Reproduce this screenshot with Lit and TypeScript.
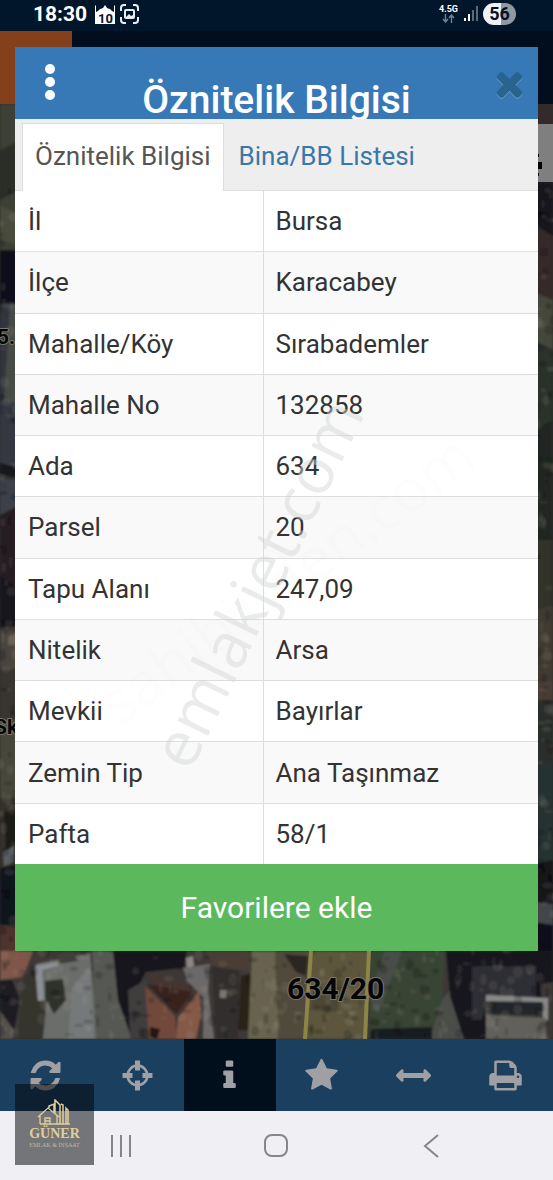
import { LitElement, html, css, svg } from "lit";
import { customElement, state } from "lit/decorators.js";

const ROWS: [string, string][] = [
  ["İl", "Bursa"],
  ["İlçe", "Karacabey"],
  ["Mahalle/Köy", "Sırabademler"],
  ["Mahalle No", "132858"],
  ["Ada", "634"],
  ["Parsel", "20"],
  ["Tapu Alanı", "247,09"],
  ["Nitelik", "Arsa"],
  ["Mevkii", "Bayırlar"],
  ["Zemin Tip", "Ana Taşınmaz"],
  ["Pafta", "58/1"],
];

const ring = (cx: number, cy: number, r: number) =>
  `M${cx - r} ${cy}a${r} ${r} 0 1 0 ${2 * r} 0a${r} ${r} 0 1 0 ${-2 * r} 0z`;

const ICONS: Record<string, string> = {
  refresh:
    "M1639 1056q0 5-1 7-64 268-268 434.500t-478 166.500q-146 0-282.500-55t-243.500-157l-129 129q-19 19-45 19t-45-19-19-45v-448q0-26 19-45t45-19h448q26 0 45 19t19 45-19 45l-137 137q71 66 161 102t187 36q134 0 250-65t186-179q11-17 53-117 8-23 30-23h192q13 0 22.500 9.500t9.500 22.500zm25-800v448q0 26-19 45t-45 19h-448q-26 0-45-19t-19-45 19-45l138-138q-148-137-349-137-134 0-250 65t-186 179q-11 17-53 117-8 23-30 23h-199q-13 0-22.500-9.500t-9.500-22.500v-7q65-268 270-434.500t480-166.500q146 0 284 55.500t245 156.500l130-129q19-19 45-19t45 19 19 45z",
  crosshairs:
    ring(896, 896, 570) +
    ring(896, 896, 435) +
    "M768 130h256v510h-256zM768 1152h256v510h-256zM130 768h510v256h-510zM1152 768h510v256h-510z",
  info:
    "M1216 1344v128q0 26-19 45t-45 19h-512q-26 0-45-19t-19-45v-128q0-26 19-45t45-19h64v-384h-64q-26 0-45-19t-19-45v-128q0-26 19-45t45-19h384q26 0 45 19t19 45v576h64q26 0 45 19t19 45zm-128-1152v192q0 26-19 45t-45 19h-256q-26 0-45-19t-19-45v-192q0-26 19-45t45-19h256q26 0 45 19t19 45z",
  star:
    "M1728 647q0 22-26 48l-363 354 86 500q1 7 1 20 0 21-10.500 35.500t-30.500 14.500q-19 0-40-12l-449-236-449 236q-22 12-40 12-21 0-31.500-14.500t-10.500-35.500q0-6 2-20l86-500-364-354q-25-27-25-48 0-37 56-46l502-73 225-455q19-41 49-41t49 41l225 455 502 73q56 9 56 46z",
  arrows:
    "M1792 896q0 26-19 45l-256 256q-19 19-45 19t-45-19-19-45v-128h-1024v128q0 26-19 45t-45 19-45-19l-256-256q-19-19-19-45t19-45l256-256q19-19 45-19t45 19 19 45v128h1024v-128q0-26 19-45t45-19 45 19l256 256q19 19 19 45z",
  print:
    "M448 1536h896v-256h-896v256zm0-640h896v-384h-160q-40 0-68-28t-28-68v-160h-640v640zm1152 64q0-26-19-45t-45-19-45 19-19 45 19 45 45 19 45-19 19-45zm128 0v416q0 13-9.500 22.500t-22.500 9.500h-224v160q0 40-28 68t-68 28h-960q-40 0-68-28t-28-68v-160h-224q-13 0-22.500-9.500t-9.500-22.500v-416q0-79 56.500-135.500t135.500-56.500h64v-544q0-40 28-68t68-28h672q40 0 88 20t76 48l152 152q28 28 48 76t20 88v256h64q79 0 135.500 56.500t56.500 135.500z",
  times:
    "M1490 1322q0 40-28 68l-136 136q-28 28-68 28t-68-28l-294-294-294 294q-28 28-68 28t-68-28l-136-136q-28-28-28-68t28-68l294-294-294-294q-28-28-28-68t28-68l136-136q28-28 68-28t68 28l294 294 294-294q28-28 68-28t68 28l136 136q28 28 28 68t-28 68l-294 294 294 294q28 28 28 68z",
};

/* Rings are cut out by parity, overlapping tabs are drawn over them separately. */
const icon = (name: string) => {
  if (name !== "crosshairs") {
    return html`<svg class="icon" viewBox="0 0 1792 1792" aria-hidden="true"><path d=${ICONS[name]}></path></svg>`;
  }
  const split = ICONS.crosshairs.indexOf("M768");
  return html`<svg class="icon" viewBox="0 0 1792 1792" aria-hidden="true">
    <path fill-rule="evenodd" d=${ICONS.crosshairs.slice(0, split)}></path>
    <path d=${ICONS.crosshairs.slice(split)}></path>
  </svg>`;
};

const TOOLS: [string, string][] = [
  ["refresh", "Yenile"],
  ["crosshairs", "Konum"],
  ["info", "Bilgi"],
  ["star", "Favoriler"],
  ["arrows", "Ölçüm"],
  ["print", "Yazdır"],
];

/* Aerial imagery as flat patches: fill colour, then polygon points. */
const PATCHES: [string, string][] = [
  ["#3e4036", "0,104 20,104 20,252 0,252"],
  ["#2b2d27", "0,150 20,140 20,190 0,200"],
  ["#4a4c3c", "0,205 20,215 20,245 0,240"],
  ["#0b0e1b", "0,250 20,250 20,304 0,304"],
  ["#464b45", "0,304 20,304 20,405 0,400"],
  ["#30343c", "0,304 10,304 4,400 0,400"],
  ["#363943", "0,400 20,405 20,470 0,465"],
  ["#12141f", "0,463 20,468 20,478 0,474"],
  ["#3d414b", "0,478 20,480 20,520 0,520"],
  ["#281d21", "0,515 20,505 20,600 0,600"],
  ["#17141a", "0,575 20,590 20,630 0,625"],
  ["#4a443d", "0,630 20,625 20,700 0,705"],
  ["#696156", "8,636 20,632 20,645 8,645"],
  ["#39362f", "0,670 20,668 20,720 0,720"],
  ["#47463a", "0,720 20,720 20,800 0,800"],
  ["#35332b", "0,798 20,798 20,870 0,870"],
  ["#1d1a16", "4,812 20,808 20,855 6,850"],
  ["#5b5f64", "3,852 14,846 14,862 4,866"],
  ["#10121c", "0,868 20,864 20,925 0,925"],
  ["#4d342d", "0,925 20,928 20,952 0,952"],
  ["#342929", "533,104 553,104 553,124 533,124"],
  ["#16131d", "533,182 553,182 553,238 533,222"],
  ["#36292b", "533,224 553,236 553,300 533,292"],
  ["#45463c", "533,292 553,300 553,350 533,340"],
  ["#2c332c", "533,340 553,350 553,440 533,440"],
  ["#222823", "533,430 553,420 553,540 533,540"],
  ["#30332b", "533,540 553,540 553,612 533,612"],
  ["#403a33", "533,610 553,606 553,680 533,680"],
  ["#4a3e39", "533,682 553,680 553,700 533,700"],
  ["#2c2e2c", "533,700 553,700 553,770 533,770"],
  ["#263130", "533,770 553,760 553,870 533,860"],
  ["#131319", "533,865 553,860 553,905 533,905"],
  ["#42454a", "533,902 553,904 553,925 533,925"],
  ["#0e0d1a", "533,922 553,925 553,960 533,960"],
  ["#3c3936", "0,951 553,951 553,1039 0,1039"],
  ["#80574a", "0,951 33,951 23,977 0,980"],
  ["#1e1d22", "0,980 12,980 20,1000 14,1030 0,1010"],
  ["#54514c", "0,1012 14,1030 12,1039 0,1039"],
  ["#35342f", "23,977 36,970 46,1008 42,1039 18,1039"],
  ["#6b6d6a", "36,964 90,953 98,1039 43,1039 47,1000 38,1001"],
  ["#8c9096", "35,966 58,962 58,966 42,970 44,1000 38,1001"],
  ["#2e302b", "45,981 63,979 66,1000 54,1014 45,998"],
  ["#40413b", "57,955 72,951 78,961 60,964"],
  ["#76797a", "72,988 90,966 94,1039 68,1039"],
  ["#575953", "92,951 114,951 118,990 132,1039 96,1039"],
  ["#17161f", "113,951 187,951 184,968 146,972 134,994 130,1034 118,1000"],
  ["#403c3d", "128,990 146,980 149,1039 130,1039"],
  ["#45342f", "145,972 200,988 177,1016"],
  ["#37231f", "147,984 192,992 176,1014"],
  ["#70493a", "145,986 175,1016 177,1039 149,1039"],
  ["#845a47", "178,1018 199,991 201,1014 196,1039 176,1039"],
  ["#201713", "150,1027 160,1029 157,1039 150,1037"],
  ["#6c6969", "183,968 210,964 208,990 214,1039 203,1039 204,998 188,982"],
  ["#8b8784", "186,958 193,956 194,966 187,968"],
  ["#302f2d", "212,966 240,958 238,1039 216,1039"],
  ["#777470", "220,990 227,990 226,998 220,998"],
  ["#493c34", "206,951 252,951 250,972 212,966"],
  ["#2c2018", "241,976 251,974 248,1030 238,1030"],
  ["#67624f", "252,951 276,951 280,1039 248,1039"],
  ["#514a3b", "275,951 310,951 305,1039 278,1039"],
  ["#2a2723", "284,954 308,956 306,976 296,972"],
  ["#5d573d", "310,951 369,951 366,1039 305,1039"],
  ["#4c4633", "314,985 342,980 338,1012 310,1010"],
  ["#394434", "371,951 445,951 442,1006 428,1039 369,1039"],
  ["#4a4d49", "384,951 402,951 378,1014 370,1000"],
  ["#4c4e4a", "442,1000 450,990 464,1039 430,1039"],
  ["#171c22", "371,1029 432,1027 432,1039 370,1039"],
  ["#15151f", "446,951 553,951 553,1000 486,1000 486,1039 464,1039 450,996"],
  ["#2d2d34", "472,966 536,966 536,1000 486,1002 482,1020 472,1020"],
  ["#3d3935", "540,984 553,982 553,1039 546,1039"],
  ["#888889", "486,995 548,998 548,1020 543,1020 543,1002 486,1001"],
  ["#24262a", "488,1002 542,1002 542,1015 488,1014"],
  ["#62615c", "486,1015 546,1018 546,1039 486,1039"],
];

/* Fixed-seed speckle that gives the imagery its ground texture. */
const speckles = (() => {
  let seed = 7;
  const next = () => (seed = (seed * 16807) % 2147483647) / 2147483647;
  return Array.from({ length: 480 }, (_, i) => {
    const edge = i % 3 === 0;
    const x = edge ? (next() > 0.5 ? 553 - next() * 15 : next() * 15) : next() * 553;
    const y = edge ? 190 + next() * 760 : 951 + next() * 88;
    return { x, y, rx: 1 + next() * 4, ry: 1 + next() * 5, light: next() > 0.5 };
  });
})();

@customElement("aerial-map")
export class AerialMap extends LitElement {
  static styles = css`
    :host {
      display: block;
      background: #2b2d2b;
    }
    .imagery {
      display: block;
      width: 100%;
      height: 100%;
    }
    .label {
      font-family: Roboto, sans-serif;
      font-weight: 700;
      fill: #050505;
      stroke: #77776f;
      stroke-width: 2px;
      stroke-linejoin: round;
      paint-order: stroke;
    }
    .parcel {
      font-size: 30px;
    }
    .small {
      font-size: 21px;
    }
  `;

  render() {
    return html`
      <svg class="imagery" viewBox="0 104 553 935" preserveAspectRatio="xMidYMax slice" role="img" aria-label="Uydu haritası">
        <defs><filter id="soft"><feGaussianBlur stdDeviation="1.1" /></filter></defs>
        <g filter="url(#soft)">
          ${PATCHES.map(([fill, points]) => svg`<polygon fill=${fill} points=${points} />`)}
          ${speckles.map(
            (s) => svg`<ellipse cx=${s.x} cy=${s.y} rx=${s.rx} ry=${s.ry}
              fill=${s.light ? "#a8a294" : "#08080c"} opacity=${s.light ? 0.14 : 0.18} />`
          )}
        </g>
        <path d="M311 951L305 1039M369 951L365 1039" stroke="#8d8547" stroke-width="4" fill="none" />
        <rect x="530" y="124" width="23" height="58" fill="#7f7f7f" />
        <path d="M530 162h12v7h-12zM534 154h5v3h-5zM534 173h5v3h-5z" fill="#000" />
        <text class="label small" x="-3" y="344">5.</text>
        <text class="label small" x="-6" y="734">Sk</text>
        <text class="label parcel" x="287" y="999">634/20</text>
      </svg>
    `;
  }
}

@customElement("app-root")
export class AppRoot extends LitElement {
  @state() private tab = 0;

  static styles = css`
    :host {
      display: flex;
      flex-direction: column;
      position: relative;
      min-height: 100vh;
      font-family: Roboto, sans-serif;
      background: #f0f0f4;
      color: #333;
    }
    * {
      box-sizing: border-box;
    }
    button {
      font: inherit;
      color: inherit;
      background: none;
      border: 0;
      padding: 0;
      margin: 0;
      cursor: pointer;
    }
    svg {
      display: block;
    }
    .icon {
      width: 35px;
      height: 35px;
      fill: currentColor;
    }

    .status {
      display: flex;
      align-items: center;
      height: 31px;
      padding: 0 37px 4px 33px;
      background: #01162a;
      color: #fff;
    }
    .clock {
      font-size: 21px;
      line-height: 24px;
      font-weight: 700;
    }
    .notices {
      display: flex;
      gap: 5px;
      margin-left: 8px;
      flex: 1;
    }
    .notices text {
      font: 700 13px Roboto, sans-serif;
      fill: #01162a;
    }
    .network {
      display: flex;
      flex-direction: column;
      align-items: center;
      margin-right: 6px;
      font-size: 9px;
      line-height: 10px;
      font-weight: 700;
    }
    .signal {
      margin-right: 5px;
    }
    .battery {
      width: 33px;
      border-radius: 11px;
      background: linear-gradient(90deg, #eef1f8 56%, #8f98a3 56%);
      color: #06101c;
      font-size: 18px;
      line-height: 22px;
      font-weight: 700;
      text-align: center;
    }

    .stage {
      flex: 1;
      display: grid;
      grid-template: 73px 1fr / 100%;
    }
    .appbar {
      grid-area: 1 / 1;
      background: linear-gradient(90deg, #84401b 72px, #020e1d 72px);
    }
    .map {
      grid-area: 2 / 1;
      height: 0;
      min-height: 100%;
    }
    .dialog {
      grid-area: 1 / 1 / 3 / 2;
      z-index: 1;
      position: relative;
      display: flex;
      flex-direction: column;
      margin: 16px 15px 88px;
      background: #fff;
    }
    .head {
      display: grid;
      grid-template-columns: 48px 1fr 48px;
      height: 72px;
      padding: 0 5px 0 11px;
      background: #3679b6;
      color: #fff;
      overflow: hidden;
    }
    .menu {
      display: grid;
      place-items: center;
      height: 70px;
    }
    .title {
      margin: 0;
      padding: 29px 6px 0 0;
      font-size: 39px;
      line-height: 48px;
      font-weight: 500;
      text-align: center;
      white-space: nowrap;
    }
    .close {
      display: grid;
      place-items: center;
      height: 72px;
      color: #29648f;
      filter: drop-shadow(0 1px 0 #6a9cc6);
    }
    .close .icon {
      width: 39px;
      height: 39px;
    }
    .tabs {
      display: flex;
      gap: 2px;
      height: 72px;
      padding: 4px 0 0 7px;
      background: #eee;
      border-bottom: 1px solid #ddd;
    }
    .tab {
      height: 68px;
      padding: 0 12px 4px;
      border: 1px solid transparent;
      border-bottom: 0;
      font-size: 26px;
      line-height: 32px;
      color: #3a77a8;
      white-space: nowrap;
    }
    .tab[aria-selected="true"] {
      background: #fff;
      border-color: #ddd;
      color: #555;
    }
    .body {
      flex: 1;
      display: grid;
    }
    .attributes {
      width: 100%;
      border-collapse: collapse;
      table-layout: fixed;
      font-size: 26px;
      line-height: 36px;
    }
    .attributes tr:nth-child(even) {
      background: #f9f9f9;
    }
    .attributes th,
    .attributes td {
      padding: 12px;
      border-bottom: 1px solid #ddd;
      font-weight: 400;
      text-align: left;
      vertical-align: middle;
    }
    .attributes tr:last-child > * {
      border-bottom: 0;
    }
    .attributes th {
      width: 248px;
      padding-left: 13px;
      border-right: 1px solid #ddd;
    }
    .favorite {
      height: 87px;
      background: #5cb85c;
      color: #fff;
      font-size: 30px;
      line-height: 36px;
    }
    .watermark {
      position: absolute;
      inset: 0;
      width: 100%;
      height: 100%;
      pointer-events: none;
      font-family: "Open Sans", sans-serif;
    }
    .mark {
      font-size: 64px;
      fill: rgba(209, 213, 213, 0.45);
    }
    .mark-faint {
      font-size: 60px;
      fill: rgba(90, 90, 90, 0.012);
    }

    .toolbar {
      display: grid;
      grid-template-columns: repeat(6, 1fr);
      height: 72px;
      padding-right: 2px;
      background: #1a3f5f;
      color: #a0a0a4;
    }
    .tool {
      display: grid;
      place-items: center;
    }
    .tool.active {
      background: #010f1c;
    }
    .system {
      display: grid;
      grid-template-columns: repeat(3, 1fr);
      height: 69px;
      padding: 0 45px 0 43px;
      background: #f0f0f4;
    }
    .system button {
      display: grid;
      place-items: center;
    }
    .system svg {
      fill: none;
      stroke: #85858a;
      stroke-width: 2;
    }
    .brand {
      position: absolute;
      left: 15px;
      bottom: 15px;
      width: 79px;
      height: 81px;
      padding-top: 15px;
      display: flex;
      flex-direction: column;
      align-items: center;
      background: rgba(0, 4, 8, 0.52);
      color: #e0cf9c;
      font-family: "Liberation Serif", serif;
    }
    .brand-name {
      font-size: 14px;
      line-height: 16px;
      font-weight: 700;
    }
    .brand-sub {
      font-size: 6px;
      line-height: 6px;
      color: #c4b993;
    }
  `;

  render() {
    return html`
      <header class="status">
        <span class="clock">18:30</span>
        <div class="notices">
          <svg width="20" height="20" viewBox="0 0 20 20" aria-hidden="true">
            <path d="M0 20V1l1 1v6l2-1Q4 5 8 4l2-3 2 3q4 1 5 3l2 1V2l1-1v19z" fill="#fff" />
            <text x="3" y="19">10</text>
          </svg>
          <svg width="19" height="20" viewBox="0 0 19 20" fill="none" stroke="#e8edf2" stroke-width="2" aria-hidden="true">
            <path d="M1 7V4q0-3 3-3h2M13 1h2q3 0 3 3v3M18 13v3q0 3-3 3h-2M6 19H4q-3 0-3-3v-3" />
            <rect x="5" y="6" width="9" height="8" rx="1" />
            <path d="M6 13l3-3 2 2 2-1v3H6z" fill="#e8edf2" stroke="none" />
          </svg>
        </div>
        <div class="network">
          <span>4.5G</span>
          <svg width="13" height="9" viewBox="0 0 13 9" fill="none" stroke="#76838f" stroke-width="1.4" aria-hidden="true">
            <path d="M3.500 0v8M1 5l2.500 3L6 5M9.500 9V1M7 4l2.500-3L12 4" />
          </svg>
        </div>
        <svg class="signal" width="14" height="15" viewBox="0 0 14 15" aria-hidden="true">
          <path d="M0 12h2v3H0zM4 8h2v7H4z" fill="#fff" />
          <path d="M8 4h2v11H8zM12 0h2v15h-2z" fill="#5d6a77" />
        </svg>
        <span class="battery">56</span>
      </header>

      <main class="stage">
        <div class="appbar"></div>
        <aerial-map class="map"></aerial-map>
        <section class="dialog" role="dialog" aria-labelledby="dialog-title">
          <div class="head">
            <button class="menu" aria-label="Menü">
              <svg width="12" height="38" viewBox="0 0 12 38" fill="#fff" aria-hidden="true">
                <circle cx="6" cy="6" r="5" /><circle cx="6" cy="19" r="5" /><circle cx="6" cy="32" r="5" />
              </svg>
            </button>
            <h1 class="title" id="dialog-title">Öznitelik Bilgisi</h1>
            <button class="close" aria-label="Kapat">${icon("times")}</button>
          </div>
          <div class="tabs" role="tablist">
            ${["Öznitelik Bilgisi", "Bina/BB Listesi"].map(
              (name, i) => html`<button class="tab" role="tab" aria-selected=${this.tab === i ? "true" : "false"}
                @click=${() => (this.tab = i)}>${name}</button>`
            )}
          </div>
          <div class="body">
            <table class="attributes">
              <tbody>
                ${ROWS.map(([key, value]) => html`<tr><th scope="row">${key}</th><td>${value}</td></tr>`)}
              </tbody>
            </table>
          </div>
          <button class="favorite">Favorilere ekle</button>
          <svg class="watermark" viewBox="0 0 523 904" aria-hidden="true">
            <text class="mark-faint" transform="translate(104 680) rotate(-36)">sahibinden.com</text>
            <text class="mark" transform="translate(175 726) rotate(-64)">emlakjet.com</text>
          </svg>
        </section>
      </main>

      <nav class="toolbar" aria-label="Harita araçları">
        ${TOOLS.map(
          ([name, label]) =>
            html`<button class="tool ${name === "info" ? "active" : ""}" aria-label=${label}>${icon(name)}</button>`
        )}
      </nav>
      <nav class="system" aria-label="Sistem">
        <button aria-label="Son uygulamalar">
          <svg width="22" height="22" viewBox="0 0 22 22"><path d="M2 0v22M11 0v22M20 0v22" /></svg>
        </button>
        <button aria-label="Ana ekran">
          <svg width="24" height="24" viewBox="0 0 24 24"><rect x="1" y="1" width="22" height="21" rx="7" /></svg>
        </button>
        <button aria-label="Geri">
          <svg width="16" height="24" viewBox="0 0 16 24"><path d="M15 1L2 12l13 11" /></svg>
        </button>
      </nav>

      <div class="brand">
        <svg width="40" height="27" viewBox="0 0 40 27" fill="none" stroke="#e0cf9c" aria-hidden="true">
          <path d="M5 25V17M3 18L13 9l11 9M22 17v8H5M10 25v-6h5v6M10 22h5" stroke-width="1.3" />
          <path d="M14 9V7l5-2v8M20 14V1l5 5v19M28 25V6l-2-1M31 25V9l2 2v14M22 25h13" stroke-width="1.5" />
        </svg>
        <span class="brand-name">GÜNER</span>
        <span class="brand-sub">EMLAK &amp; İNŞAAT</span>
      </div>
    `;
  }
}
